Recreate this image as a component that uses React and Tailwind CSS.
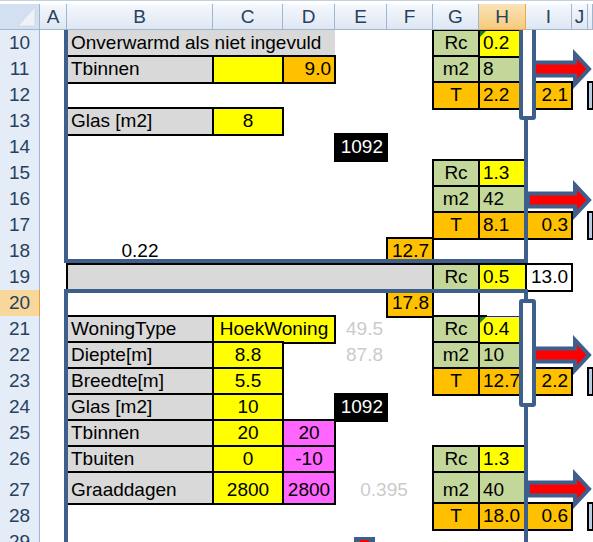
const COLS =
  "grid grid-cols-[40px_27px_146px_70px_52px_52px_46px_46px_47px_46px_16px_1fr]";
const BOX = "shadow-[0_0_0_1px_#000,inset_0_0_0_1px_#000]";

const GRAY = "bg-[#d9d9d9]";
const YELLOW = "bg-[#ffff00]";
const ORANGE = "bg-[#ffc000]";
const GREEN = "bg-[#c4d79b]";
const PINK = "bg-[#ff66ff]";
const SKY = "bg-[#b8cce4]";

const LEFT = "pl-[4px]";
const RIGHT = "text-right pr-[4px]";
const MID = "text-center";

const letters = ["A", "B", "C", "D", "E", "F", "G", "H", "I", "J", ""];

function Cell({ className = "", children }) {
  return (
    <div className={`whitespace-nowrap leading-[26px] ${className}`}>
      {children}
    </div>
  );
}

// little green comment marker in the top-left corner of a cell
function Marker() {
  return (
    <svg className="absolute left-[1px] top-[1px]" width="6" height="6">
      <path d="M0 0H6L0 6Z" fill="#1f7a2c" />
    </svg>
  );
}

function Row({ n, active, tall, children }) {
  return (
    <div className={`${COLS} ${tall ? "h-[31px] *:pt-[5px]" : "h-[26px]"}`}>
      <div
        className={`col-start-1 border-r border-b text-center leading-[26px] text-[#27415f] ${
          active ? "border-[#f29b3a] bg-[#f8d79b]" : "border-[#9eb6ce] bg-[#e4ecf7]"
        }`}
      >
        {n}
      </div>
      {children}
    </div>
  );
}

function Arrow({ className }) {
  return (
    <svg
      className={`absolute left-[526px] ${className}`}
      width="67"
      height="40"
      viewBox="0 0 67 40"
    >
      <polygon
        points="2,13.5 49,13.5 49,5 63,20 49,35 49,26.5 2,26.5"
        fill="#ff0000"
        stroke="#3e5f8c"
        strokeWidth="4"
      />
    </svg>
  );
}

export default function App() {
  return (
    <div className="relative h-[542px] w-[593px] overflow-hidden bg-white font-['Liberation_Sans',Arial,sans-serif] text-[19px] text-black">
      {/* column headers */}
      <div className="relative z-20 bg-white">
        <div className="h-[4px] border-t border-[#c3d0df]" />
        <div className={`${COLS} h-[26px] text-[#27415f]`}>
          <div className="relative border-r border-b border-[#9eb6ce] bg-[#d3e0f1]">
            <svg className="absolute left-0 top-0" width="40" height="26">
              <path d="M18 22L35 3V22Z" fill="#eef1f5" stroke="#c7cfd9" strokeWidth="0.5" />
            </svg>
          </div>
          {letters.map((l, i) =>
            l === "H" ? (
              <div
                key={i}
                className="border-r border-b border-[#f2a54a] bg-linear-to-b from-[#fbe3b6] to-[#f6ca7c] text-center leading-[25px]"
              >
                {l}
              </div>
            ) : (
              <div
                key={i}
                className="border-r border-b border-[#9eb6ce] bg-linear-to-b from-[#f5f8fc] to-[#dee7f3] text-center leading-[25px]"
              >
                {l}
              </div>
            )
          )}
        </div>
      </div>

      <Row n={10}>
        <Cell className={`col-start-3 col-span-3 ${GRAY} ${LEFT}`}>Onverwarmd als niet ingevuld</Cell>
        <Cell className={`col-start-8 ${GREEN} ${BOX} ${MID}`}>Rc</Cell>
        <Cell className={`relative col-start-9 ${YELLOW} ${BOX} ${LEFT}`}>
          <Marker />
          0.2
        </Cell>
      </Row>
      <Row n={11}>
        <Cell className={`col-start-3 ${GRAY} ${BOX} ${LEFT}`}>Tbinnen</Cell>
        <Cell className={`col-start-4 ${YELLOW} ${BOX}`} />
        <Cell className={`col-start-5 ${ORANGE} ${BOX} ${RIGHT}`}>9.0</Cell>
        <Cell className={`col-start-8 ${GREEN} ${BOX} ${MID}`}>m2</Cell>
        <Cell className={`col-start-9 ${GREEN} ${BOX} ${LEFT}`}>8</Cell>
      </Row>
      <Row n={12}>
        <Cell className={`col-start-8 ${ORANGE} ${BOX} ${MID}`}>T</Cell>
        <Cell className={`col-start-9 ${ORANGE} ${BOX} ${LEFT}`}>2.2</Cell>
        <Cell className={`col-start-10 ${ORANGE} ${BOX} ${RIGHT}`}>2.1</Cell>
        <Cell className={`col-start-12 ${SKY} ${BOX}`} />
      </Row>
      <Row n={13}>
        <Cell className={`col-start-3 ${GRAY} ${BOX} ${LEFT}`}>Glas [m2]</Cell>
        <Cell className={`col-start-4 ${YELLOW} ${BOX} ${MID}`}>8</Cell>
      </Row>
      <Row n={14}>
        <Cell className={`col-start-6 bg-black text-white ${BOX} ${RIGHT}`}>1092</Cell>
      </Row>
      <Row n={15}>
        <Cell className={`col-start-8 ${GREEN} ${BOX} ${MID}`}>Rc</Cell>
        <Cell className={`col-start-9 ${YELLOW} ${BOX} ${LEFT}`}>1.3</Cell>
      </Row>
      <Row n={16}>
        <Cell className={`col-start-8 ${GREEN} ${BOX} ${MID}`}>m2</Cell>
        <Cell className={`col-start-9 ${GREEN} ${BOX} ${LEFT}`}>42</Cell>
      </Row>
      <Row n={17}>
        <Cell className={`col-start-8 ${ORANGE} ${BOX} ${MID}`}>T</Cell>
        <Cell className={`col-start-9 ${ORANGE} ${BOX} ${LEFT}`}>8.1</Cell>
        <Cell className={`col-start-10 ${ORANGE} ${BOX} ${RIGHT}`}>0.3</Cell>
        <Cell className={`col-start-12 ${SKY} ${BOX}`} />
      </Row>
      <Row n={18}>
        <Cell className={`col-start-3 ${MID}`}>0.22</Cell>
        <Cell className={`col-start-7 ${ORANGE} ${BOX} ${RIGHT}`}>12.7</Cell>
      </Row>
      <Row n={19}>
        <Cell className={`col-start-3 col-span-5 ${GRAY} ${BOX}`} />
        <Cell className={`col-start-8 ${GREEN} ${BOX} ${MID}`}>Rc</Cell>
        <Cell className={`col-start-9 ${YELLOW} ${BOX} ${LEFT}`}>0.5</Cell>
        <Cell className={`col-start-10 bg-white ${BOX} ${RIGHT}`}>13.0</Cell>
      </Row>
      <Row n={20} active>
        <Cell className={`col-start-7 ${ORANGE} ${BOX} ${RIGHT}`}>17.8</Cell>
        <Cell className="col-start-9 shadow-[-1px_0_0_#000,inset_1px_0_0_#000]" />
      </Row>
      <Row n={21}>
        <Cell className={`col-start-3 ${GRAY} ${BOX} ${LEFT}`}>WoningType</Cell>
        <Cell className={`col-start-4 col-span-2 ${YELLOW} ${BOX} ${MID}`}>HoekWoning</Cell>
        <Cell className={`col-start-6 text-[#cbcbcb] ${RIGHT}`}>49.5</Cell>
        <Cell className={`col-start-8 ${GREEN} ${BOX} ${MID}`}>Rc</Cell>
        <Cell className={`relative col-start-9 ${YELLOW} ${BOX} ${LEFT}`}>
          <div className="absolute left-[8px] right-0 top-[-1px] h-[2px] border-t border-white bg-[#1a1aff]" />
          <Marker />
          0.4
        </Cell>
      </Row>
      <Row n={22}>
        <Cell className={`col-start-3 ${GRAY} ${BOX} ${LEFT}`}>Diepte[m]</Cell>
        <Cell className={`col-start-4 ${YELLOW} ${BOX} ${MID}`}>8.8</Cell>
        <Cell className={`col-start-6 text-[#cbcbcb] ${RIGHT}`}>87.8</Cell>
        <Cell className={`col-start-8 ${GREEN} ${BOX} ${MID}`}>m2</Cell>
        <Cell className={`col-start-9 ${GREEN} ${BOX} ${LEFT}`}>10</Cell>
      </Row>
      <Row n={23}>
        <Cell className={`col-start-3 ${GRAY} ${BOX} ${LEFT}`}>Breedte[m]</Cell>
        <Cell className={`col-start-4 ${YELLOW} ${BOX} ${MID}`}>5.5</Cell>
        <Cell className={`col-start-8 ${ORANGE} ${BOX} ${MID}`}>T</Cell>
        <Cell className={`col-start-9 ${ORANGE} ${BOX} ${LEFT}`}>12.7</Cell>
        <Cell className={`col-start-10 ${ORANGE} ${BOX} ${RIGHT}`}>2.2</Cell>
        <Cell className={`col-start-12 ${SKY} ${BOX}`} />
      </Row>
      <Row n={24}>
        <Cell className={`col-start-3 ${GRAY} ${BOX} ${LEFT}`}>Glas [m2]</Cell>
        <Cell className={`col-start-4 ${YELLOW} ${BOX} ${MID}`}>10</Cell>
        <Cell className={`col-start-6 bg-black text-white ${BOX} ${RIGHT}`}>1092</Cell>
      </Row>
      <Row n={25}>
        <Cell className={`col-start-3 ${GRAY} ${BOX} ${LEFT}`}>Tbinnen</Cell>
        <Cell className={`col-start-4 ${YELLOW} ${BOX} ${MID}`}>20</Cell>
        <Cell className={`col-start-5 ${PINK} ${BOX} ${MID}`}>20</Cell>
      </Row>
      <Row n={26}>
        <Cell className={`col-start-3 ${GRAY} ${BOX} ${LEFT}`}>Tbuiten</Cell>
        <Cell className={`col-start-4 ${YELLOW} ${BOX} ${MID}`}>0</Cell>
        <Cell className={`col-start-5 ${PINK} ${BOX} ${MID}`}>-10</Cell>
        <Cell className={`col-start-8 ${GREEN} ${BOX} ${MID}`}>Rc</Cell>
        <Cell className={`col-start-9 ${YELLOW} ${BOX} ${LEFT}`}>1.3</Cell>
      </Row>
      <Row n={27} tall>
        <Cell className={`col-start-3 ${GRAY} ${BOX} ${LEFT}`}>Graaddagen</Cell>
        <Cell className={`col-start-4 ${YELLOW} ${BOX} ${MID}`}>2800</Cell>
        <Cell className={`col-start-5 ${PINK} ${BOX} ${MID}`}>2800</Cell>
        <Cell className={`col-start-6 col-span-2 text-[#cbcbcb] ${MID}`}>0.395</Cell>
        <Cell className={`col-start-8 ${GREEN} ${BOX} ${MID}`}>m2</Cell>
        <Cell className={`col-start-9 ${GREEN} ${BOX} ${LEFT}`}>40</Cell>
      </Row>
      <Row n={28}>
        <Cell className={`col-start-8 ${ORANGE} ${BOX} ${MID}`}>T</Cell>
        <Cell className={`col-start-9 ${ORANGE} ${BOX} ${LEFT}`}>18.0</Cell>
        <Cell className={`col-start-10 ${ORANGE} ${BOX} ${RIGHT}`}>0.6</Cell>
        <Cell className={`col-start-12 ${SKY} ${BOX}`} />
      </Row>
      <Row n={29} />

      {/* drawing layer: rooms, windows and heat-flow arrows */}
      <div className="absolute left-[64px] top-[10px] z-10 h-[253px] w-[464px] border-4 border-[#3e5f8c]" />
      <div className="absolute left-[64px] top-[289px] z-10 h-[300px] w-[464px] border-4 border-[#3e5f8c]" />
      <div className="absolute inset-0 z-10">
        <Arrow className="top-[49px]" />
        <Arrow className="top-[180px]" />
        <Arrow className="top-[335px]" />
        <Arrow className="top-[469px]" />
      </div>
      <div className="absolute left-[519px] top-[8px] z-10 h-[112px] w-[17px] rounded-[3px] border-4 border-[#3e5f8c] bg-white" />
      <div className="absolute left-[519px] top-[299px] z-10 h-[108px] w-[17px] rounded-[3px] border-4 border-[#3e5f8c] bg-white" />
      <div className="absolute left-[354px] top-[537px] z-10 h-[8px] w-[21px] bg-[#3e5f8c]">
        <div className="mx-auto mt-[3px] h-[5px] w-[9px] bg-[#ff0000]" />
      </div>
    </div>
  );
}
